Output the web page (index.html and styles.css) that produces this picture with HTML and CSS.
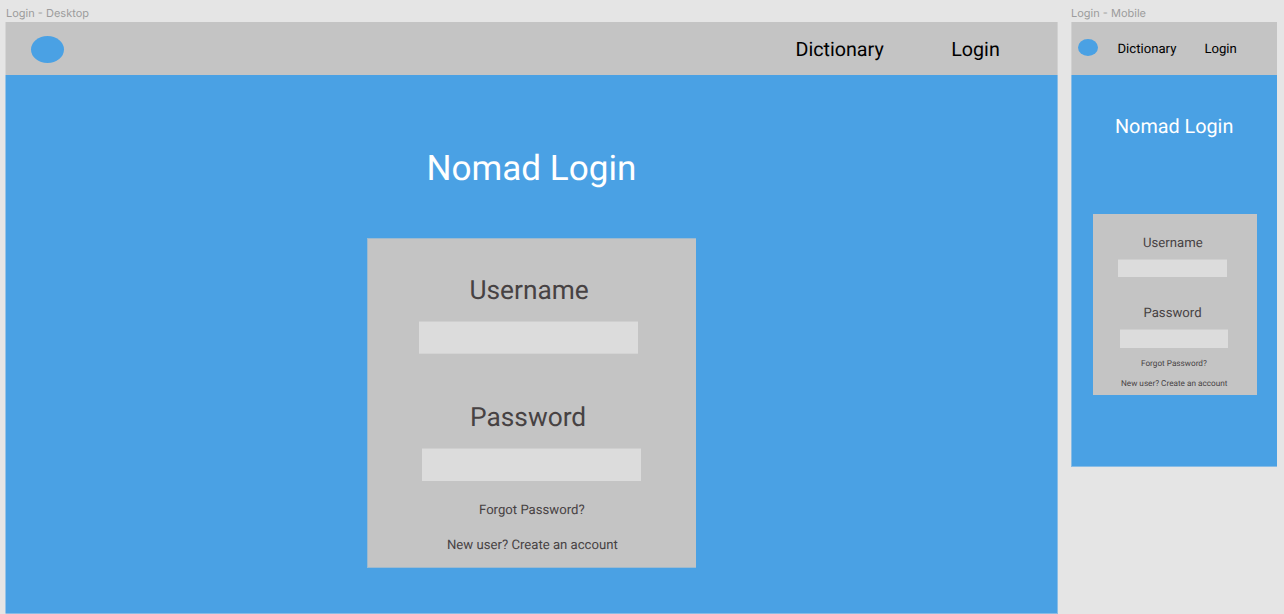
FILE: index.html
```html
<!DOCTYPE html>
<html lang="en">
<head>
<meta charset="utf-8">
<title>Nomad Login</title>
<link rel="stylesheet" href="styles.css">
</head>
<body>
<main class="board">
  <section class="artboard desktop">
    <div class="caption">Login - Desktop</div>
    <div class="frame">
      <header class="bar">
        <span class="logo"></span>
        <nav class="nav"><a class="nav-link">Dictionary</a><a class="nav-link">Login</a></nav>
      </header>
      <h1 class="title">Nomad Login</h1>
      <form class="card">
        <label class="label user-label">Username</label>
        <div class="field user-field"></div>
        <label class="label pass-label">Password</label>
        <div class="field pass-field"></div>
        <a class="link forgot">Forgot Password?</a>
        <a class="link create">New user? Create an account</a>
      </form>
    </div>
  </section>
  <section class="artboard mobile">
    <div class="caption">Login - Mobile</div>
    <div class="frame">
      <header class="bar">
        <span class="logo"></span>
        <nav class="nav"><a class="nav-link">Dictionary</a><a class="nav-link">Login</a></nav>
      </header>
      <h1 class="title">Nomad Login</h1>
      <form class="card">
        <label class="label user-label">Username</label>
        <div class="field user-field"></div>
        <label class="label pass-label">Password</label>
        <div class="field pass-field"></div>
        <a class="link forgot">Forgot Password?</a>
        <a class="link create">New user? Create an account</a>
      </form>
    </div>
  </section>
</main>
</body>
</html>
```
FILE: styles.css
```css
* { box-sizing: border-box; }
body { margin: 0; background: #e5e5e5; font-family: Roboto, "Liberation Sans", sans-serif; overflow: hidden; text-rendering: geometricPrecision; }
.board { display: flex; align-items: flex-start; gap: 13px; height: 614px; padding: 6px 0 0 5px; }
.caption { height: 16px; font: 11px/14px Inter, sans-serif; color: #9c9c9c; white-space: nowrap; }
.frame { position: relative; display: flex; flex-direction: column; align-items: flex-start; background: #4aa1e4; }
.frame::after { content: ""; position: absolute; inset: 0; pointer-events: none; }
.bar { display: flex; align-items: flex-start; width: 100%; height: 53px; background: #c4c4c4; }
.logo { flex: none; border-radius: 50%; background: #4aa1e4; }
.nav { display: flex; color: #000; white-space: nowrap; }
.title { margin: 0; font-weight: 400; color: #fff; white-space: nowrap; }
.card { display: flex; flex-direction: column; align-items: flex-start; background: #c4c4c4; }
.label, .link { color: #474243; white-space: nowrap; }
.field { background: #dcdcdc; border-top: 1px solid #cfcfcf; }

.desktop .caption { padding-left: 1px; }
.desktop .frame { width: 1053px; height: 592px; }
.desktop .frame::after { box-shadow: inset 1px 0 rgba(229, 229, 229, .5), inset -1px -1px rgba(229, 229, 229, .4); }
.desktop .logo { width: 33px; height: 27px; margin: 14px 0 0 26px; }
.desktop .nav { margin: 16px 0 0 731.5px; gap: 67.5px; font-size: 19.7px; line-height: 24px; }
.desktop .title { margin: 72px 0 0 421.5px; font-size: 35.1px; line-height: 42px; }
.desktop .card { width: 329px; height: 330px; margin: 49px 0 0 362px; border: solid #9dbacf; border-width: 1px 0 1px 1px; }
.desktop .label { font-size: 26.3px; line-height: 30px; }
.desktop .user-label { margin: 37px 0 0 101.5px; }
.desktop .field { width: 219px; height: 33px; }
.desktop .user-field { margin: 15px 0 0 51px; border-bottom: 1px solid #d4d4d4; }
.desktop .pass-label { margin: 49px 0 0 102px; }
.desktop .pass-field { margin: 15px 0 0 54px; }
.desktop .link { font-size: 13.15px; line-height: 16px; }
.desktop .forgot { margin: 22px 0 0 111px; }
.desktop .create { margin: 19px 0 0 79px; }

.mobile .frame { width: 206px; height: 445px; }
.mobile .frame::after { box-shadow: inset 1px -1px rgba(229, 229, 229, .4); }
.mobile .logo { width: 20px; height: 17px; margin: 17px 0 0 7px; }
.mobile .nav { margin: 19px 0 0 19.5px; gap: 28px; font-size: 13.15px; line-height: 17px; }
.mobile .title { margin: 40px 0 0 44px; font-size: 19.8px; line-height: 24px; }
.mobile .card { width: 164px; height: 181px; margin: 75px 0 0 22px; }
.mobile .label { font-size: 13.15px; line-height: 16px; }
.mobile .user-label { margin: 22px 0 0 50px; }
.mobile .field { height: 18px; }
.mobile .user-field { width: 109px; margin: 7px 0 0 25px; }
.mobile .pass-label { margin: 29px 0 0 50.5px; }
.mobile .pass-field { width: 108px; height: 19px; margin: 7px 0 0 27px; }
.mobile .link { font-size: 8.2px; line-height: 10px; }
.mobile .forgot { margin: 11px 0 0 48px; }
.mobile .create { margin: 10px 0 0 28px; }
```
